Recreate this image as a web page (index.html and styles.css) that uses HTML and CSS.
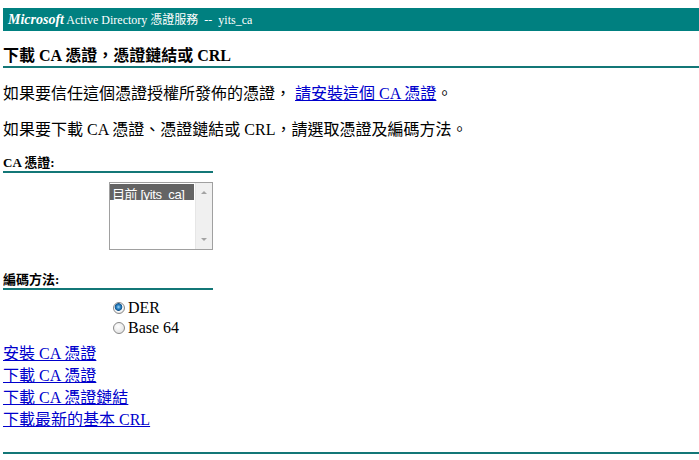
FILE: index.html
```html
<!DOCTYPE html>
<html>
<head>
    <meta charset="utf-8">
    <title>Microsoft Active Directory 憑證服務</title>
    <link rel="stylesheet" href="styles.css">
</head>
<body>

<div class="banner"><b class="ms">Microsoft</b> Active Directory 憑證服務 &nbsp;-- &nbsp;yits_ca</div>

<div class="tit">下載 CA 憑證，憑證鏈結或 CRL</div>

<p class="txt">如果要信任這個憑證授權所發佈的憑證， <a href="javascript:;">請安裝這個 CA 憑證</a>。</p>

<p class="txt">如果要下載 CA 憑證、憑證鏈結或 CRL，請選取憑證及編碼方法。</p>

<div class="sub">CA 憑證:</div>
<div class="listbox">
    <div class="items">
        <div class="item item-sel">目前 [yits_ca]</div>
    </div>
    <div class="scroll">
        <span class="arr arr-up"></span>
        <span class="arr arr-down"></span>
    </div>
</div>

<div class="sub sub-enc">編碼方法:</div>
<div class="radios">
    <label class="rd"><span class="dot dot-on"></span>DER</label>
    <label class="rd"><span class="dot"></span>Base 64</label>
</div>

<div class="links">
    <a href="javascript:;">安裝 CA 憑證</a>
    <a href="javascript:;">下載 CA 憑證</a>
    <a href="javascript:;">下載 CA 憑證鏈結</a>
    <a href="javascript:;">下載最新的基本 CRL</a>
</div>

<div class="foot"></div>

</body>
</html>
```

FILE: styles.css
```css
body{ margin: 8px 0 0 3px;font: 16px "Liberation Serif", "Noto Sans CJK TC", serif;color: #000;background: #FFF;}
a{ color: #0000cc;}

.banner{ height: 23px;line-height: 23px;padding-left: 5px;background: #008080;color: #FFF;font-size: 12px;white-space: nowrap;}
.banner .ms{ font-style: italic;font-size: 14px;}

.tit{ margin-top: 15px;line-height: 20px;font-weight: bold;border-bottom: solid 2px #137777;}
.txt{ margin: 16px 0 0 0;line-height: 20px;}

.sub{ width: 210px;margin-top: 15px;line-height: 16px;font-size: 13px;font-weight: bold;border-bottom: solid 2px #137777;}
.sub-enc{ margin-top: 22px;}

.listbox{ display: flex;width: 102px;height: 66px;margin: 9px 0 0 106px;border: solid 1px #a0a0a0;background: #FFF;}
.listbox .items{ flex: 1;padding: 1px 1px 0 0;}
.listbox .item{ height: 16px;line-height: 16px;padding-left: 2px;font: 13px "Liberation Sans", "Noto Sans CJK TC", sans-serif;letter-spacing: -0.4px;white-space: nowrap;}
.listbox .item-sel{ background: #646464;color: #FFF;}
.listbox .scroll{ display: flex;flex-direction: column;justify-content: space-between;align-items: center;width: 17px;padding: 8px 0;box-sizing: border-box;background: #f0f0f0;border-left: solid 1px #e6e6e6;}
.arr{ width: 0;height: 0;border-left: solid 3px transparent;border-right: solid 3px transparent;}
.arr-up{ border-bottom: solid 3px #a3a3a3;}
.arr-down{ border-top: solid 3px #a3a3a3;}

.radios{ margin: 8px 0 0 110px;}
.rd{ display: flex;align-items: center;height: 20px;}
.dot{ width: 10px;height: 10px;margin-right: 3px;border-radius: 50%;border: solid 1px #8a8a8a;background: radial-gradient(circle at 40% 35%, #ffffff, #dcdcdc);}
.dot-on{ background: radial-gradient(circle at 45% 40%, #9fd3f5 0, #2a83c4 2px, #15568e 3.5px, #ffffff 4.2px, #e4e4e4 6px);}

.links{ display: flex;flex-direction: column;align-items: flex-start;margin-top: 5px;line-height: 22px;}

.foot{ margin-top: 21px;border-top: solid 2px #137777;}
```
